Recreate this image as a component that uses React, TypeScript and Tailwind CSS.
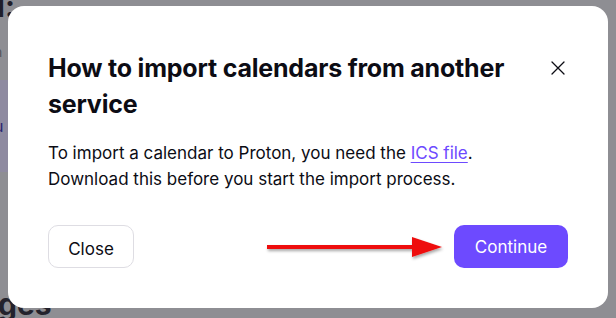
import React from "react";

export default function App() {
  return (
    <div className="relative w-[616px] h-[318px] overflow-hidden bg-[#8e8e93] font-['Inter','Liberation_Sans',sans-serif]">
      {/* background page fragments, dimmed by overlay */}
      <div className="flex flex-col w-[120px]">
        <div className="-ml-[14px] -mt-[10px] h-[32px] text-[30px] leading-[32px] font-bold text-[#1f1e2a]">d:</div>
        <div className="mt-[20px] -ml-[6px] h-[20px] text-[14px] leading-[20px] text-[#55555a]">n</div>
        <div className="mt-[18px] h-[92px] bg-[#8e8aa0] flex items-center">
          <span className="-ml-[6px] text-[16px] text-[#2a2470]">u</span>
        </div>
        <div className="mt-[116px] -ml-[2px] text-[30px] leading-[32px] font-bold text-[#23222c]">ges</div>
      </div>

      {/* modal */}
      <div className="absolute left-[8px] top-[6px] w-[600px] h-[302px] bg-white rounded-[16px] px-[40px] pt-[44px] pb-[40px] flex flex-col">
        <div className="flex items-start justify-between">
          <h1 className="text-[25px] leading-[36px] font-bold text-[#0c0c14] w-[480px] tracking-[-0.2px]">
            How to import calendars from another service
          </h1>
          <button className="w-[32px] h-[36px] flex items-center justify-center -mr-[6px] text-[#0c0c14]">
            <svg width="16" height="16" viewBox="0 0 16 16" fill="none" stroke="currentColor" strokeWidth="1.3" strokeLinecap="round">
              <path d="M2 2L14 14M14 2L2 14" />
            </svg>
          </button>
        </div>
        <p className="mt-[18px] text-[17px] leading-[26px] text-[#0c0c14]">
          To import a calendar to Proton, you need the{" "}
          <span className="text-[#6d4aff] underline underline-offset-[3px]">ICS file</span>.
          <br />
          Download this before you start the import process.
        </p>
        <div className="mt-auto flex items-center justify-between">
          <button className="h-[43px] w-[86px] rounded-[10px] border border-[#dedde3] text-[17px] leading-[43px] pt-[2px] text-[#0c0c14]">
            Close
          </button>
          <div className="flex items-center">
            <svg width="184" height="30" viewBox="0 0 184 30" className="mr-[6px]">
              <defs>
                <filter id="sh" x="-10%" y="-50%" width="120%" height="200%">
                  <feDropShadow dx="1" dy="2" stdDeviation="1.5" floodColor="#000" floodOpacity="0.35" />
                </filter>
              </defs>
              <g filter="url(#sh)">
                <rect x="3" y="13" width="148" height="4" fill="#ee1111" />
                <polygon points="148,5 178,15 148,25" fill="#ee1111" />
              </g>
            </svg>
            <button className="h-[43px] w-[114px] rounded-[10px] bg-[#6d4aff] text-[17px] pt-[2px] text-white">
              Continue
            </button>
          </div>
        </div>
      </div>
    </div>
  );
}
